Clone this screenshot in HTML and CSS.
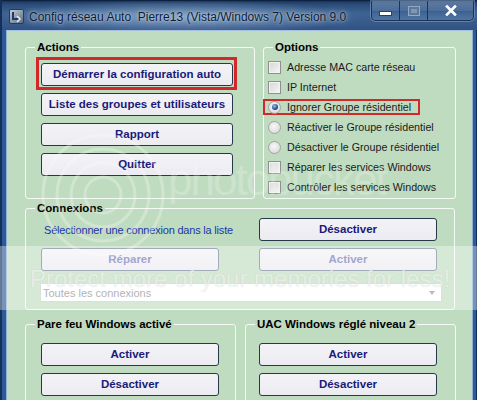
FILE: index.html
```html
<!DOCTYPE html>
<html lang="fr">
<head>
<meta charset="utf-8">
<title>Config réseau Auto</title>
<link rel="stylesheet" href="styles.css">
</head>
<body>
<div class="window">
  <header class="titlebar">
    <svg class="app-icon" width="15" height="15" viewBox="0 0 15 15">
      <defs>
        <linearGradient id="ig" x1="0" y1="0" x2="1" y2="1">
          <stop offset="0" stop-color="#c9d3de"/>
          <stop offset="1" stop-color="#56687f"/>
        </linearGradient>
      </defs>
      <rect x="0.5" y="0.5" width="14" height="14" rx="1.5" fill="url(#ig)" stroke="#2a3a52"/>
      <path d="M4 3 V10 H11" fill="none" stroke="#1f3b66" stroke-width="2"/>
      <path d="M8 7 L11 10 L8 13" fill="none" stroke="#e8eef6" stroke-width="1.5"/>
    </svg>
    <span class="title">Config réseau Auto&nbsp; Pierre13 (Vista/Windows 7) Version 9.0</span>
    <div class="caption-buttons">
      <span class="cap cap-min">
        <svg width="13" height="5" viewBox="0 0 13 5"><rect x="0.5" y="0.5" width="12" height="4" fill="#ffffff" stroke="#2b3e5a"/></svg>
      </span>
      <span class="cap cap-max">
        <svg width="12" height="10" viewBox="0 0 12 10"><rect x="0.5" y="0.5" width="11" height="9" fill="#5f7899" stroke="#93a8c2"/><rect x="3" y="3" width="6" height="4" fill="#7f96b4"/></svg>
      </span>
      <span class="cap cap-close">
        <svg width="12" height="11" viewBox="0 0 12 11"><path d="M2 1.5 L10 9.5 M10 1.5 L2 9.5" stroke="#ffffff" stroke-width="2.6" stroke-linecap="square"/></svg>
      </span>
    </div>
  </header>

  <main class="client">
    <div class="row-top">
      <fieldset class="group">
        <legend>Actions</legend>
        <div class="actions-body">
          <div class="hl-box"><button class="btn wide">Démarrer la configuration auto</button></div>
          <button class="btn wide">Liste des groupes et utilisateurs</button>
          <button class="btn wide">Rapport</button>
          <button class="btn wide">Quitter</button>
        </div>
      </fieldset>

      <fieldset class="group">
        <legend>Options</legend>
        <div class="options-body">
          <div class="opt"><span class="check"></span>Adresse MAC carte réseau</div>
          <div class="opt"><span class="check"></span>IP Internet</div>
          <div class="opt opt-hl"><span class="radio on"></span>Ignorer Groupe résidentiel</div>
          <div class="opt"><span class="radio"></span>Réactiver le Groupe résidentiel</div>
          <div class="opt"><span class="radio"></span>Désactiver le Groupe résidentiel</div>
          <div class="opt"><span class="check"></span>Réparer les services Windows</div>
          <div class="opt"><span class="check"></span>Contrôler les services Windows</div>
        </div>
      </fieldset>
    </div>

    <fieldset class="group connexions">
      <legend>Connexions</legend>
      <div class="conn-body">
        <div class="conn-grid">
          <span class="conn-label">Sélectionner une connexion dans la liste</span>
          <button class="btn">Désactiver</button>
          <button class="btn" disabled>Réparer</button>
          <button class="btn" disabled>Activer</button>
        </div>
        <div class="combo">
          <span class="combo-text">Toutes les connexions</span>
          <span class="combo-arrow"></span>
        </div>
      </div>
    </fieldset>

    <div class="row-bottom">
      <fieldset class="group bottom">
        <legend>Pare feu Windows activé</legend>
        <div class="pair-body">
          <button class="btn">Activer</button>
          <button class="btn">Désactiver</button>
        </div>
      </fieldset>
      <fieldset class="group bottom">
        <legend>UAC Windows réglé niveau 2</legend>
        <div class="pair-body right">
          <button class="btn">Activer</button>
          <button class="btn">Désactiver</button>
        </div>
      </fieldset>
    </div>
  </main>

  <div class="wm-logo">
    <svg width="150" height="150" viewBox="0 0 150 150">
      <g fill="none" stroke="rgba(255,255,255,0.28)" stroke-width="3">
        <circle cx="75" cy="75" r="18"/>
        <circle cx="75" cy="75" r="32"/>
        <circle cx="75" cy="75" r="46"/>
        <circle cx="75" cy="75" r="60"/>
      </g>
    </svg>
  </div>
  <div class="wm-word">photobucket</div>
  <div class="wm-band"></div>
  <div class="wm-text">Protect more of your memories for less!</div>
</div>
</body>
</html>
```

FILE: styles.css
```css
* {
  box-sizing: border-box;
}

html, body {
  margin: 0;
  padding: 0;
}

body {
  width: 477px;
  height: 400px;
  overflow: hidden;
  background: #1e3c66;
  font-family: "Liberation Sans", Arial, sans-serif;
}

.window {
  position: relative;
  width: 477px;
  height: 400px;
  display: flex;
  flex-direction: column;
  background: #2d5b96;
  box-shadow: inset 2px 0 0 #14305a, inset -1px 0 0 #14305a;
  overflow: hidden;
}

/* ---------- title bar ---------- */
.titlebar {
  height: 30px;
  flex: none;
  display: flex;
  align-items: center;
  padding: 3px 0 0 9px;
  background:
    radial-gradient(ellipse 230px 22px at 180px 17px, rgba(160, 188, 220, 0.65), rgba(160, 188, 220, 0) 78%),
    linear-gradient(#132c50 0, #2a4b77 4px, #3d6391 13px, #385b8b 22px, #2f5384 30px);
  box-shadow: inset 2px 0 0 #14305a, inset 0 1px 0 #0d2140;
}

.app-icon {
  flex: none;
  display: block;
}

.title {
  margin-left: 5px;
  font-size: 12px;
  color: #0b1a33;
  white-space: nowrap;
  text-shadow: 0 0 6px rgba(220, 232, 245, 0.9), 0 0 2px rgba(220, 232, 245, 0.7);
}

.caption-buttons {
  margin: -2px 3px 0 auto;
  align-self: flex-start;
  display: flex;
  height: 20px;
  border: 1px solid #1a3458;
  border-top: none;
  border-radius: 0 0 5px 5px;
  box-shadow: 0 0 0 1px rgba(150, 180, 215, 0.45);
  overflow: hidden;
}

.cap {
  display: flex;
  align-items: center;
  justify-content: center;
  height: 100%;
  background: linear-gradient(rgba(170, 195, 225, 0.45), rgba(120, 150, 190, 0.3) 50%, rgba(60, 95, 140, 0.35) 51%, rgba(110, 145, 190, 0.45));
}

.cap + .cap {
  border-left: 1px solid #1a3458;
}

.cap-min { width: 27px; padding-top: 5px; }
.cap-max { width: 28px; }
.cap-close { width: 46px; }

/* ---------- client area ---------- */
.client {
  flex: 1;
  margin: 0 4px 0 6px;
  border-left: 1px solid #8eaed6;
  border-right: 1px solid #8eaed6;
  border-top: 1px solid #a6c0de;
  background: #c0dcc0;
  padding: 9px 17px 0 18px;
  display: flex;
  flex-direction: column;
}

.group {
  margin: 0;
  padding: 0;
  min-width: 0;
  border: 1px solid rgba(255, 255, 255, 0.85);
  border-radius: 3px;
}

.group legend {
  margin-left: 9px;
  padding: 0 2px;
  font-size: 11.5px;
  font-weight: bold;
  line-height: 14px;
  color: #000;
}

.row-top {
  display: grid;
  grid-template-columns: 230px 193px;
  column-gap: 8px;
  height: 159px;
}

/* ---------- buttons ---------- */
.btn {
  display: block;
  width: 178px;
  height: 23px;
  padding: 0;
  border: 1px solid #26384a;
  border-radius: 3px;
  background: linear-gradient(#f3f3f7, #ebebf1);
  font-family: "Liberation Sans", Arial, sans-serif;
  font-size: 11.5px;
  font-weight: bold;
  color: #1a1a7a;
  line-height: 21px;
  text-align: center;
}

.btn.wide {
  width: 192px;
}

.btn:disabled {
  border-color: #6f8092;
  color: #7474b6;
}

/* ---------- actions ---------- */
.actions-body {
  padding: 3px 0 0 10px;
  display: flex;
  flex-direction: column;
  align-items: flex-start;
  gap: 7px;
}

.actions-body > .btn {
  margin-left: 5px;
}

.hl-box {
  border: 3px solid #d3272a;
  padding: 3px 1px 1px 2px;
  margin-bottom: -4px;
}

/* ---------- options ---------- */
.options-body {
  padding: 3px 0 0 4px;
  display: flex;
  flex-direction: column;
}

.opt {
  height: 20px;
  display: flex;
  align-items: center;
  gap: 6px;
  font-size: 10.7px;
  color: #1a1a1a;
  white-space: nowrap;
}

.opt-hl {
  height: 16px;
  margin: 2px 0 2px -5px;
  padding: 0 7px 0 3px;
  border: 2px solid #d3272a;
  align-self: flex-start;
}

.check {
  flex: none;
  width: 13px;
  height: 13px;
  border: 1px solid #8e8f8f;
  background: linear-gradient(135deg, #d6d6d6, #f6f6f6);
  box-shadow: inset 0 0 0 1px #f2f2f2;
}

.radio {
  flex: none;
  width: 13px;
  height: 13px;
  border-radius: 50%;
  border: 1px solid #a3a3a3;
  background: radial-gradient(circle at 45% 40%, #f8f8f8, #d3d3d3);
  display: flex;
  align-items: center;
  justify-content: center;
}

.radio.on::after {
  content: "";
  width: 6px;
  height: 6px;
  border-radius: 50%;
  background: radial-gradient(circle at 40% 35%, #9cc0ea, #23508f 60%, #10284e);
}

/* ---------- connexions ---------- */
.connexions {
  margin-top: 2px;
  height: 109px;
}

.conn-body {
  padding: 3px 0 0 15px;
}

.conn-grid {
  display: grid;
  grid-template-columns: 178px 178px;
  column-gap: 40px;
  row-gap: 7px;
}

.conn-label {
  align-self: center;
  padding-left: 3px;
  font-size: 11px;
  letter-spacing: -0.2px;
  color: #2036a6;
  white-space: nowrap;
}

.combo {
  margin: 12px 0 0 -1px;
  width: 402px;
  height: 19px;
  border: 1px solid #c6d2c6;
  background: #ffffff;
  display: flex;
  align-items: center;
  padding: 0 6px 0 2px;
}

.combo-text {
  flex: 1;
  font-size: 11px;
  color: #8a8a8a;
}

.combo-arrow {
  width: 0;
  height: 0;
  border-left: 3.5px solid transparent;
  border-right: 3.5px solid transparent;
  border-top: 4px solid #9a9a9a;
}

/* ---------- bottom groups ---------- */
.row-bottom {
  margin-top: 7px;
  display: grid;
  grid-template-columns: 211px 211px;
  column-gap: 9px;
}

.bottom {
  height: 100px;
}

.pair-body {
  padding: 12px 0 0 15px;
  display: flex;
  flex-direction: column;
  gap: 7px;
}

.pair-body.right {
  padding-left: 13px;
}

/* ---------- photobucket watermark (overlay) ---------- */
.wm-logo {
  position: absolute;
  left: 28px;
  top: 120px;
  pointer-events: none;
}

.wm-logo svg {
  display: block;
}

.wm-word {
  position: absolute;
  left: 168px;
  top: 158px;
  font-size: 44px;
  line-height: 1;
  letter-spacing: -2px;
  color: rgba(255, 255, 255, 0.22);
  pointer-events: none;
}

.wm-band {
  position: absolute;
  left: 0;
  right: 0;
  top: 246px;
  height: 64px;
  background: rgba(255, 255, 255, 0.35);
  pointer-events: none;
}

.wm-text {
  position: absolute;
  left: 30px;
  top: 267px;
  font-size: 24px;
  line-height: 1;
  color: rgba(255, 255, 255, 0.6);
  text-shadow: 0 0 1px rgba(120, 140, 120, 0.25);
  white-space: nowrap;
  pointer-events: none;
}
```
